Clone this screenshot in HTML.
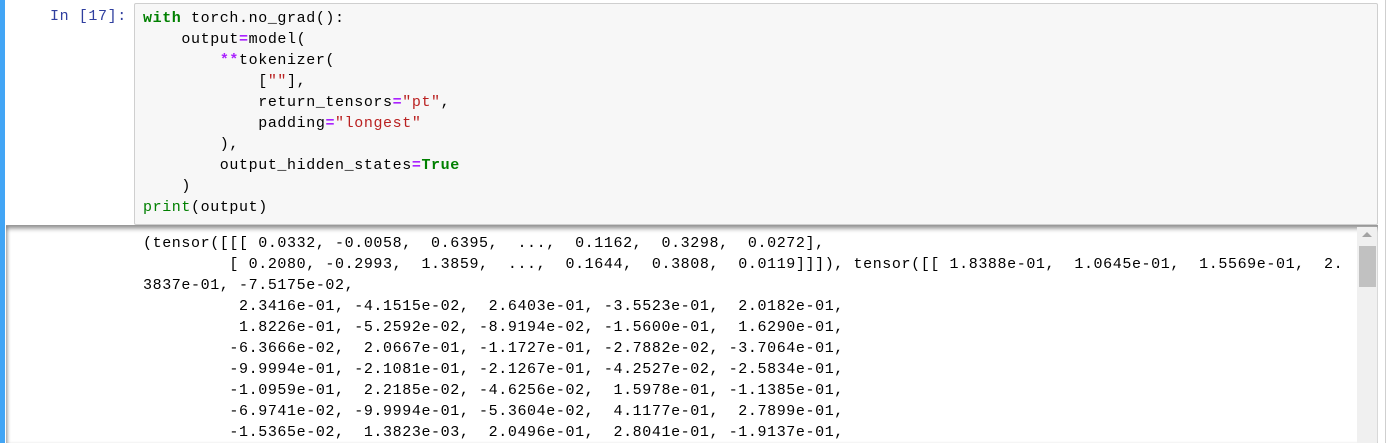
<!DOCTYPE html>
<html style="overflow:hidden;height:443px;"><head><meta charset="utf-8"><style>
html,body{margin:0;overflow:hidden;}
body{width:1397px;height:443px;background:#fff;position:relative;font-family:"Liberation Mono",monospace;}
.bar{position:absolute;left:0;top:0;width:5px;height:443px;background:#42a5f5;}
.rb{position:absolute;left:1385px;top:0;width:1px;height:443px;background:#cfcfcf;}
.prompt{position:absolute;left:50px;top:8px;font-size:15px;color:#303f9f;letter-spacing:0.6px;}
.inp{position:absolute;left:134px;top:3px;width:1242px;height:220px;background:#f7f7f7;border:1px solid #cfcfcf;border-radius:2px;}
pre{margin:0;font-family:"Liberation Mono",monospace;font-size:15px;letter-spacing:0.6px;line-height:21px;white-space:pre;}
.code{position:absolute;left:143px;top:8px;color:#000;}
.k{color:#008000;font-weight:bold}.o{color:#aa22ff;font-weight:bold}.s{color:#ba2121}.b{color:#008000}
.out{position:absolute;left:6px;top:225px;width:1372px;height:218px;background:#fff;box-shadow:inset 0 3px 4px rgba(0,0,0,0.35),inset 2px 0 3px rgba(0,0,0,0.2);border-top:1px solid #999;}
.otext{position:absolute;left:143px;top:233px;color:#000;}
.sb{position:absolute;left:1357px;top:227px;width:20px;height:216px;background:#f0f0f0;}
.thumb{position:absolute;left:1359px;top:246px;width:17px;height:41px;background:#c1c1c1;}
.arr{position:absolute;left:1362px;top:232px;width:0;height:0;border-left:5px solid transparent;border-right:5px solid transparent;border-bottom:5px solid #a3a3a3;}
</style></head><body>
<div class="bar"></div>
<div class="rb"></div>
<div class="prompt">In [17]:</div>
<div class="inp"></div>
<pre class="code"><span class="k">with</span> torch.no_grad():
    output<span class="o">=</span>model(
        <span class="o">**</span>tokenizer(
            [<span class="s">""</span>],
            return_tensors<span class="o">=</span><span class="s">"pt"</span>,
            padding<span class="o">=</span><span class="s">"longest"</span>
        ),
        output_hidden_states<span class="o">=</span><span class="k">True</span>
    )
<span class="b">print</span>(output)</pre>
<div class="out"></div>
<pre class="otext">(tensor([[[ 0.0332, -0.0058,  0.6395,  ...,  0.1162,  0.3298,  0.0272],
         [ 0.2080, -0.2993,  1.3859,  ...,  0.1644,  0.3808,  0.0119]]]), tensor([[ 1.8388e-01,  1.0645e-01,  1.5569e-01,  2.
3837e-01, -7.5175e-02,
          2.3416e-01, -4.1515e-02,  2.6403e-01, -3.5523e-01,  2.0182e-01,
          1.8226e-01, -5.2592e-02, -8.9194e-02, -1.5600e-01,  1.6290e-01,
         -6.3666e-02,  2.0667e-01, -1.1727e-01, -2.7882e-02, -3.7064e-01,
         -9.9994e-01, -2.1081e-01, -2.1267e-01, -4.2527e-02, -2.5834e-01,
         -1.0959e-01,  2.2185e-02, -4.6256e-02,  1.5978e-01, -1.1385e-01,
         -6.9741e-02, -9.9994e-01, -5.3604e-02,  4.1177e-01,  2.7899e-01,
         -1.5365e-02,  1.3823e-03,  2.0496e-01,  2.8041e-01, -1.9137e-01,</pre>
<div class="sb"></div><div class="arr"></div><div class="thumb"></div>
</body></html>
